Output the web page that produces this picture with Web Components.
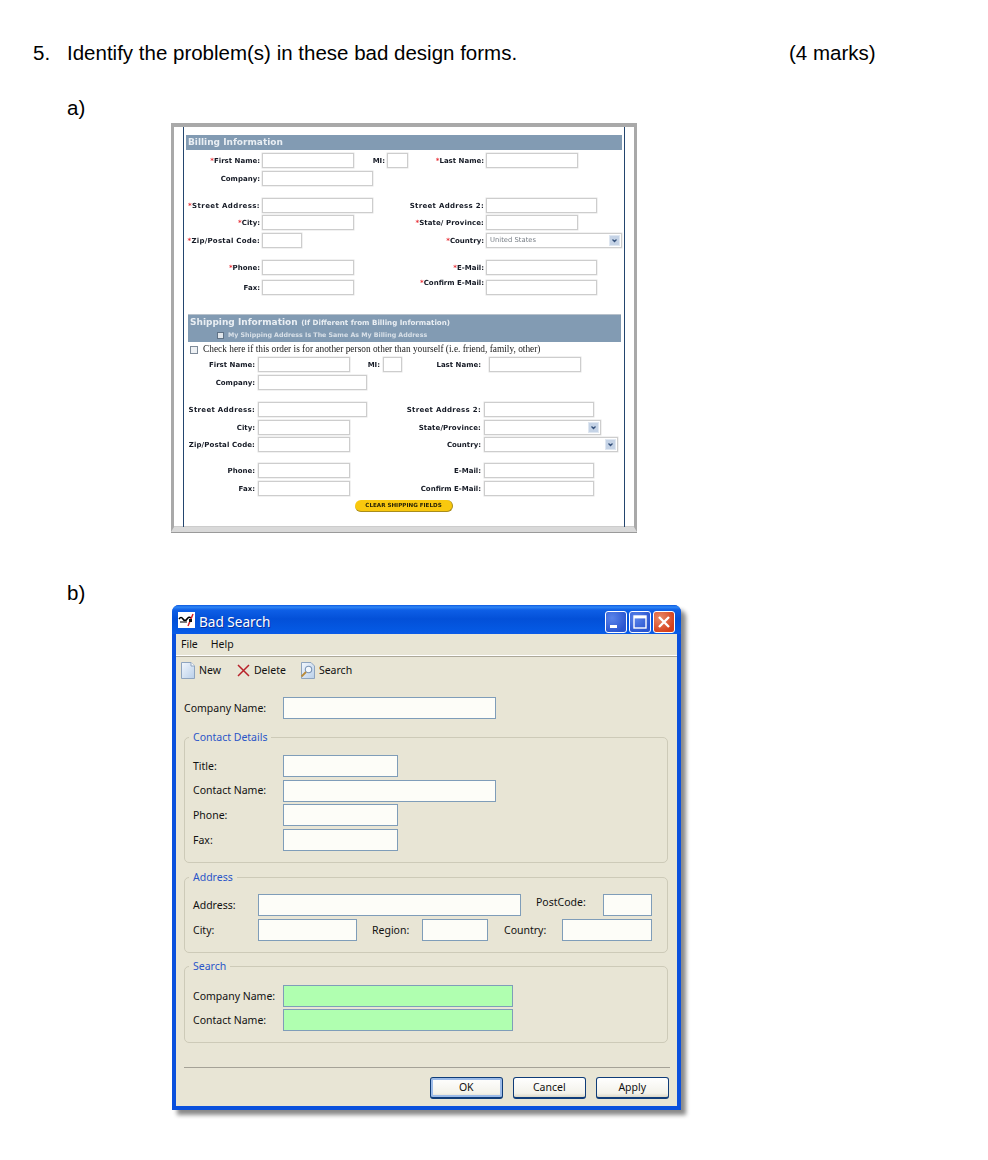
<!DOCTYPE html>
<html>
<head>
<meta charset="utf-8">
<style>
html, body { margin: 0; background: #fff; }
</style>
</head>
<body>
<exam-page>
  <exam-heading num="5." marks="(4 marks)">Identify the problem(s) in these bad design forms.</exam-heading>
  <exam-part top="32" gap="4" name="a)">
    <web-form-shot>
      <form-band>Billing Information</form-band>
      <form-row top="3"><form-field req label="First Name:" lw="74" w="92"></form-field><form-field label="MI:" lw="31" w="21"></form-field><form-field req label="Last Name:" lw="76" w="92"></form-field></form-row>
      <form-row top="3"><form-field label="Company:" lw="74" w="111"></form-field></form-row>
      <form-row top="12"><form-field req ls=".4" label="Street Address:" lw="74" w="111"></form-field><form-field ls=".3" label="Street Address 2:" lw="111" w="111"></form-field></form-row>
      <form-row top="2"><form-field req label="City:" lw="74" w="92"></form-field><form-field req ls=".1" label="State/ Province:" lw="130" w="92"></form-field></form-row>
      <form-row top="3"><form-field req ls=".25" label="Zip/Postal Code:" lw="74" w="40"></form-field><form-field req label="Country:" lw="182" w="136" select value="United States"></form-field></form-row>
      <form-row top="12"><form-field req label="Phone:" lw="74" w="92"></form-field><form-field req label="E-Mail:" lw="130" w="111"></form-field></form-row>
      <form-row top="5"><form-field label="Fax:" lw="74" w="92"></form-field><form-field req up label="Confirm E-Mail:" lw="130" w="111"></form-field></form-row>
      <form-rule></form-rule>
      <form-band big sub="(If Different from Billing Information)" check="My Shipping Address Is The Same As My Billing Address">Shipping Information</form-band>
      <form-check>Check here if this order is for another person other than yourself (i.e. friend, family, other)</form-check>
      <form-row><form-field gap="3" label="First Name:" lw="69" w="92"></form-field><form-field gap="3" label="MI:" lw="30" w="19"></form-field><form-field gap="8" label="Last Name:" lw="79" w="92"></form-field></form-row>
      <form-row top="3"><form-field gap="3" label="Company:" lw="69" w="109"></form-field></form-row>
      <form-row top="12"><form-field gap="3" ls=".3" label="Street Address:" lw="69" w="109"></form-field><form-field gap="3" ls=".3" label="Street Address 2:" lw="114" w="110"></form-field></form-row>
      <form-row top="3"><form-field gap="3" label="City:" lw="69" w="92"></form-field><form-field gap="3" ls=".1" label="State/Province:" lw="131" w="117" select></form-field></form-row>
      <form-row top="2"><form-field gap="3" ls=".1" label="Zip/Postal Code:" lw="69" w="92"></form-field><form-field gap="3" label="Country:" lw="131" w="134" select></form-field></form-row>
      <form-row top="11"><form-field gap="3" label="Phone:" lw="69" w="92"></form-field><form-field gap="3" label="E-Mail:" lw="131" w="110"></form-field></form-row>
      <form-row top="3"><form-field gap="3" label="Fax:" lw="69" w="92"></form-field><form-field gap="3" label="Confirm E-Mail:" lw="131" w="110"></form-field></form-row>
      <form-pill>CLEAR SHIPPING FIELDS</form-pill>
    </web-form-shot>
  </exam-part>
  <exam-part top="49" gap="1" name="b)">
    <xp-window title="Bad Search">
      <xp-row top="14"><xp-field label="Company Name:" lw="99" w="213"></xp-field></xp-row>
      <xp-group top="18" pad="17" legend="Contact Details">
        <xp-row><xp-field label="Title:" lw="90" w="115"></xp-field></xp-row>
        <xp-row top="2.67"><xp-field label="Contact Name:" lw="90" w="213"></xp-field></xp-row>
        <xp-row top="2.67"><xp-field label="Phone:" lw="90" w="115"></xp-field></xp-row>
        <xp-row top="2.67"><xp-field label="Fax:" lw="90" w="115"></xp-field></xp-row>
      </xp-group>
      <xp-group top="14" pad="16" legend="Address">
        <xp-row><xp-field label="Address:" lw="65" w="263"></xp-field><xp-field up left="15" label="PostCode:" lw="67" w="49"></xp-field></xp-row>
        <xp-row top="3"><xp-field label="City:" lw="65" w="99"></xp-field><xp-field left="15" label="Region:" lw="50" w="66"></xp-field><xp-field left="16" label="Country:" lw="58" w="90"></xp-field></xp-row>
      </xp-group>
      <xp-group top="13" pad="18" legend="Search">
        <xp-row><xp-field green label="Company Name:" lw="90" w="230"></xp-field></xp-row>
        <xp-row top="2"><xp-field green label="Contact Name:" lw="90" w="230"></xp-field></xp-row>
      </xp-group>
      <xp-actions>
        <xp-button focus>OK</xp-button>
        <xp-button>Cancel</xp-button>
        <xp-button>Apply</xp-button>
      </xp-actions>
    </xp-window>
  </exam-part>
</exam-page>

<script>
class ExamPage extends HTMLElement {
    constructor() {
        super();
        this.attachShadow({ mode: "open" });
        this.shadowRoot.innerHTML = `
<style>
:host { display: block; width: 988px; height: 1160px; box-sizing: border-box; padding-top: 41px; overflow: hidden;
        font-family: "Liberation Sans", Arial, sans-serif; color: #000; }
</style>
<slot></slot>`;
    }
}
customElements.define("exam-page", ExamPage);

class ExamHeading extends HTMLElement {
    constructor() {
        super();
        this.attachShadow({ mode: "open" });
        this.shadowRoot.innerHTML = `
<style>
:host { display: flex; font-size: 20.5px; line-height: 23px; padding-left: 33px; white-space: nowrap; }
#num { width: 34px; }
#text { width: 722px; }
</style>
<div id="num">${this.getAttribute("num")}</div>
<div id="text"><slot></slot></div>
<div>${this.getAttribute("marks")}</div>`;
    }
}
customElements.define("exam-heading", ExamHeading);

class ExamPart extends HTMLElement {
    constructor() {
        super();
        this.attachShadow({ mode: "open" });
        this.shadowRoot.innerHTML = `
<style>
:host { display: block; font-size: 20.5px; line-height: 23px; margin-top: ${this.getAttribute("top")}px; }
#name { padding-left: 67px; margin-bottom: ${this.getAttribute("gap")}px; }
</style>
<div id="name">${this.getAttribute("name")}</div>
<slot></slot>`;
    }
}
customElements.define("exam-part", ExamPart);

class WebFormShot extends HTMLElement {
    constructor() {
        super();
        this.attachShadow({ mode: "open" });
        this.shadowRoot.innerHTML = `
<style>
:host { display: block; box-sizing: border-box; width: 466px; height: 409px; margin-left: 171px; background: #fff;
        border: 3px solid #a9a9a9; border-top-width: 4px; border-bottom: 5px solid #d9d9d9;
        box-shadow: inset 0 -1px 0 #ccc, 0 1px 0 #9a9a9a; filter: blur(.35px);
        font-family: "DejaVu Sans", Verdana, sans-serif; line-height: 1; color: #141924; }
#inner { box-sizing: border-box; height: 100%; margin: 0 9px; padding: 8px 2px 0;
         border-left: 1.5px solid #23456e; border-right: 1.5px solid #23456e; }
</style>
<div id="inner"><slot></slot></div>`;
    }
}
customElements.define("web-form-shot", WebFormShot);

class FormBand extends HTMLElement {
    constructor() {
        super();
        this.attachShadow({ mode: "open" });
        const big = this.hasAttribute("big");
        const sub = this.getAttribute("sub");
        const check = this.getAttribute("check");
        this.shadowRoot.innerHTML = `
<style>
:host { display: block; box-sizing: border-box; background: #829bb3; color: #e9eef3; white-space: nowrap;
        height: ${big ? 27 : 15}px; padding: 3px 0 0 2px; margin-left: ${big ? 2 : 0}px;
        margin-right: ${big ? 1 : 0}px; font-weight: bold; font-size: 9px; }
b { font-size: 7.1px; margin-left: 1px; }
#check { display: flex; align-items: center; padding: 5px 0 0 27px; font-size: 6.3px; color: #d8e0e8; }
#check i { width: 7px; height: 7px; background: #dfe5ea; border: 1px solid #5f7286; box-sizing: border-box; margin-right: 4px; }
</style>
<div><slot></slot>${sub ? `<b> ${sub}</b>` : ""}</div>
${check ? `<div id="check"><i></i><span>${check}</span></div>` : ""}`;
    }
}
customElements.define("form-band", FormBand);

class FormRow extends HTMLElement {
    constructor() {
        super();
        this.attachShadow({ mode: "open" });
        this.shadowRoot.innerHTML = `
<style>
:host { display: flex; height: 15px; margin-top: ${this.getAttribute("top") || 0}px; }
</style>
<slot></slot>`;
    }
}
customElements.define("form-row", FormRow);

class FormField extends HTMLElement {
    constructor() {
        super();
        this.attachShadow({ mode: "open" });
        const req = this.hasAttribute("req") ? `<span class="req">*</span>` : "";
        const select = this.hasAttribute("select");
        const value = this.getAttribute("value") || "";
        this.shadowRoot.innerHTML = `
<style>
:host { display: flex; align-items: center; font-size: 7px; font-weight: bold; white-space: nowrap; }
#label { width: ${this.getAttribute("lw")}px; text-align: right; margin-right: ${this.getAttribute("gap") || 2}px;
         letter-spacing: ${this.getAttribute("ls") || 0}px; flex: none; position: relative;
         top: ${this.hasAttribute("up") ? -4 : 1}px; }
.req { color: #e8333a; }
#box { box-sizing: border-box; width: ${this.getAttribute("w")}px; height: 15px; background: #fff; flex: none;
       border: 1px solid #cdcdcd; box-shadow: 0 0 0 .5px #e4e4e4;
       display: flex; align-items: center; justify-content: space-between; padding: 0 1px 0 3px;
       font-weight: normal; color: #7a8088; font-size: 6.8px; }
#arrow { width: 11px; height: 11px; background: #c5d3e6; border: 1px solid #dfe7f1; box-sizing: border-box; }
svg { display: block; }
</style>
<div id="label">${req}${this.getAttribute("label")}</div>
<div id="box">
  <span>${value}</span>
  ${select ? `<div id="arrow"><svg width="9" height="9" viewBox="0 0 9 9"><path d="M2.5 3.5 L4.5 5.5 L6.5 3.5" fill="none" stroke="#34507a" stroke-width="1.3"/></svg></div>` : ""}
</div>`;
    }
}
customElements.define("form-field", FormField);

class FormRule extends HTMLElement {
    constructor() {
        super();
        this.attachShadow({ mode: "open" });
        this.shadowRoot.innerHTML = `
<style>
:host { display: block; height: 1px; background: #b7c1cb; margin: 19px 1px 0 2px; }
</style>`;
    }
}
customElements.define("form-rule", FormRule);

class FormCheck extends HTMLElement {
    constructor() {
        super();
        this.attachShadow({ mode: "open" });
        this.shadowRoot.innerHTML = `
<style>
:host { display: flex; align-items: center; height: 15px; padding-left: 4px; white-space: nowrap;
        font-family: "Liberation Serif", "Times New Roman", serif; font-size: 9.35px; color: #222; }
i { width: 8px; height: 8px; box-sizing: border-box; border: 1px solid #7f8b99; background: #eef1f4; margin-right: 5px; }
</style>
<i></i><span><slot></slot></span>`;
    }
}
customElements.define("form-check", FormCheck);

class FormPill extends HTMLElement {
    constructor() {
        super();
        this.attachShadow({ mode: "open" });
        this.shadowRoot.innerHTML = `
<style>
:host { display: flex; align-items: center; justify-content: center; box-sizing: border-box; width: 98px; height: 12px;
        margin: 4px auto 0; border-radius: 6px; background: #f9c80e; border-bottom: 1px solid #a98d1c;
        border-right: 1px solid #a98d1c; font-size: 5.6px; font-weight: bold; color: #2a2408; white-space: nowrap; }
</style>
<slot></slot>`;
    }
}
customElements.define("form-pill", FormPill);

class XpWindow extends HTMLElement {
    constructor() {
        super();
        this.attachShadow({ mode: "open" });
        this.shadowRoot.innerHTML = `
<style>
:host { display: flex; flex-direction: column; box-sizing: border-box; width: 509px; height: 505px; margin-left: 172px;
        border-radius: 7px 7px 0 0; background: #0a50dd; padding: 0 4px 4px;
        box-shadow: 5px 5px 4px #8a8a8a; color: #111;
        font-family: "Noto Sans", Tahoma, sans-serif; font-size: 10.5px; line-height: 1; }
#title { display: flex; align-items: center; height: 29px; flex: none; margin: 0 -4px; padding: 0 6px;
         border-radius: 7px 7px 0 0;
         background: linear-gradient(#0a58e0 0, #2f86f5 2px, #0e5fe6 5px, #0350d8 14px, #0458e2 24px, #0a5be8 29px); }
#logo { margin-right: 4px; display: block; }
#name { color: #fff; font-size: 13.6px; flex: 1; text-shadow: 1px 1px 0 #0a2f9a; padding-top: 5px; }
.btn { width: 22px; height: 22px; box-sizing: border-box; margin: 4px 0 0 2px; border: 1px solid #fff; border-radius: 3px;
       background: radial-gradient(circle at 30% 30%, #5a84ea, #2a55d0 75%); display: block; }
.btn.close { background: radial-gradient(circle at 30% 30%, #e88a68, #d5401c 75%); margin-right: 0; }
#body { flex: 1; background: #e8e5d5; display: flex; flex-direction: column; min-height: 0; }
#menu { height: 21px; flex: none; display: flex; align-items: center; gap: 13px; padding-left: 5px; }
#rule { height: 2px; flex: none; box-sizing: border-box; border-top: 1px solid #fff; border-bottom: 1px solid #aca899; }
#tools { height: 26px; flex: none; display: flex; align-items: center; padding-left: 5px; }
.tool { display: flex; align-items: center; gap: 4px; }
.tool svg { display: block; }
#content { padding: 0 8px; }
</style>
<div id="title">
  <svg id="logo" width="17" height="16" viewBox="0 0 17 16">
    <rect width="17" height="16" fill="#fff"/>
    <path d="M1 7 Q3 4 5 7 T9 7 T13 6" fill="none" stroke="#000" stroke-width="1.6"/>
    <path d="M2 10 H9" stroke="#222" stroke-width="1.2"/>
    <path d="M15 2 L10 14" stroke="#d9202a" stroke-width="1.5"/>
    <rect x="11" y="7" width="3" height="3" fill="#111"/>
  </svg>
  <div id="name">${this.getAttribute("title")}</div>
  <svg class="btn" viewBox="0 0 20 20"><rect x="4" y="13" width="7" height="3" fill="#fff"/></svg>
  <svg class="btn" viewBox="0 0 20 20"><rect x="4" y="4" width="12" height="12" fill="none" stroke="#fff" stroke-width="1.4"/><rect x="4" y="4" width="12" height="2.4" fill="#fff"/></svg>
  <svg class="btn close" viewBox="0 0 20 20"><path d="M5 5 L15 15 M15 5 L5 15" stroke="#fff" stroke-width="2.4"/></svg>
</div>
<div id="body">
  <div id="menu"><span>File</span><span>Help</span></div>
  <div id="rule"></div>
  <div id="tools">
    <div class="tool" style="margin-right:16px">
      <svg width="14" height="17" viewBox="0 0 14 17"><defs><linearGradient id="d" x1="0" y1="0" x2="1" y2="1"><stop offset="0" stop-color="#f2f7fd"/><stop offset="1" stop-color="#b9cfe9"/></linearGradient></defs><path d="M.5 .5 H10 L13.5 4 V16.5 H.5 Z" fill="url(#d)" stroke="#8ea4bf"/><path d="M10 .5 V4 H13.5" fill="#fff" stroke="#8ea4bf"/></svg>
      <span>New</span>
    </div>
    <div class="tool" style="margin-right:14px">
      <svg width="13" height="13" viewBox="0 0 13 13"><path d="M1 1 L12 12 M12 1 L1 12" stroke="#b8222a" stroke-width="1.5"/></svg>
      <span>Delete</span>
    </div>
    <div class="tool">
      <svg width="15" height="17" viewBox="0 0 15 17"><path d="M1.5 .5 H11 L14.5 4 V16.5 H1.5 Z" fill="url(#d)" stroke="#8ea4bf"/><circle cx="8.5" cy="7.5" r="3.2" fill="#f4f8fc" stroke="#7a94b5" stroke-width="1.1"/><path d="M6 10 L1.5 14.5" stroke="#b98a3a" stroke-width="1.8"/></svg>
      <span>Search</span>
    </div>
  </div>
  <div id="content"><slot></slot></div>
</div>`;
    }
}
customElements.define("xp-window", XpWindow);

class XpRow extends HTMLElement {
    constructor() {
        super();
        this.attachShadow({ mode: "open" });
        this.shadowRoot.innerHTML = `
<style>
:host { display: flex; height: 22px; margin-top: ${this.getAttribute("top") || 0}px; }
</style>
<slot></slot>`;
    }
}
customElements.define("xp-row", XpRow);

class XpField extends HTMLElement {
    constructor() {
        super();
        this.attachShadow({ mode: "open" });
        const green = this.hasAttribute("green");
        this.shadowRoot.innerHTML = `
<style>
:host { display: flex; align-items: center; white-space: nowrap; margin-left: ${this.getAttribute("left") || 0}px; }
#label { width: ${this.getAttribute("lw")}px; flex: none; ${this.hasAttribute("up") ? "position: relative; top: -3px;" : ""} }
#box { box-sizing: border-box; width: ${this.getAttribute("w")}px; height: 22px; flex: none; border: 1px solid #7f9db9;
       background-color: ${green ? "#b0ffb0" : "#fdfdf8"};
       background-image: radial-gradient(${green ? "#c4ffc4" : "#ebebe0"} .5px, transparent .7px); background-size: 2px 2px; }
</style>
<div id="label">${this.getAttribute("label")}</div>
<div id="box"></div>`;
    }
}
customElements.define("xp-field", XpField);

class XpGroup extends HTMLElement {
    constructor() {
        super();
        this.attachShadow({ mode: "open" });
        this.shadowRoot.innerHTML = `
<style>
:host { display: block; position: relative; box-sizing: border-box; width: 484px; margin-top: ${this.getAttribute("top")}px;
        border: 1px solid #cdcab8; border-radius: 5px; padding: ${this.getAttribute("pad")}px 0 11px 8px; }
#legend { position: absolute; left: 4px; top: -6px; padding: 0 4px; background: #e8e5d5; color: #2a55c8; }
</style>
<div id="legend">${this.getAttribute("legend")}</div>
<slot></slot>`;
    }
}
customElements.define("xp-group", XpGroup);

class XpActions extends HTMLElement {
    constructor() {
        super();
        this.attachShadow({ mode: "open" });
        this.shadowRoot.innerHTML = `
<style>
:host { display: flex; justify-content: flex-end; gap: 9.5px; box-sizing: border-box; width: 486px; margin-top: 24px;
        border-top: 1px solid #a5a297; padding: 9px 1px 0 0; }
</style>
<slot></slot>`;
    }
}
customElements.define("xp-actions", XpActions);

class XpButton extends HTMLElement {
    constructor() {
        super();
        this.attachShadow({ mode: "open" });
        const focus = this.hasAttribute("focus");
        this.shadowRoot.innerHTML = `
<style>
:host { display: flex; align-items: center; justify-content: center; box-sizing: border-box; width: 73.5px; height: 22px;
        border: 1px solid #0f3c78; border-bottom-width: 2px; border-radius: 3px;
        background: linear-gradient(#fff, #f3f2ea 80%, #dcd8c8);
        ${focus ? "box-shadow: inset 0 0 0 2px #9cbbe8;" : ""} }
</style>
<slot></slot>`;
    }
}
customElements.define("xp-button", XpButton);
</script>
</body>
</html>
